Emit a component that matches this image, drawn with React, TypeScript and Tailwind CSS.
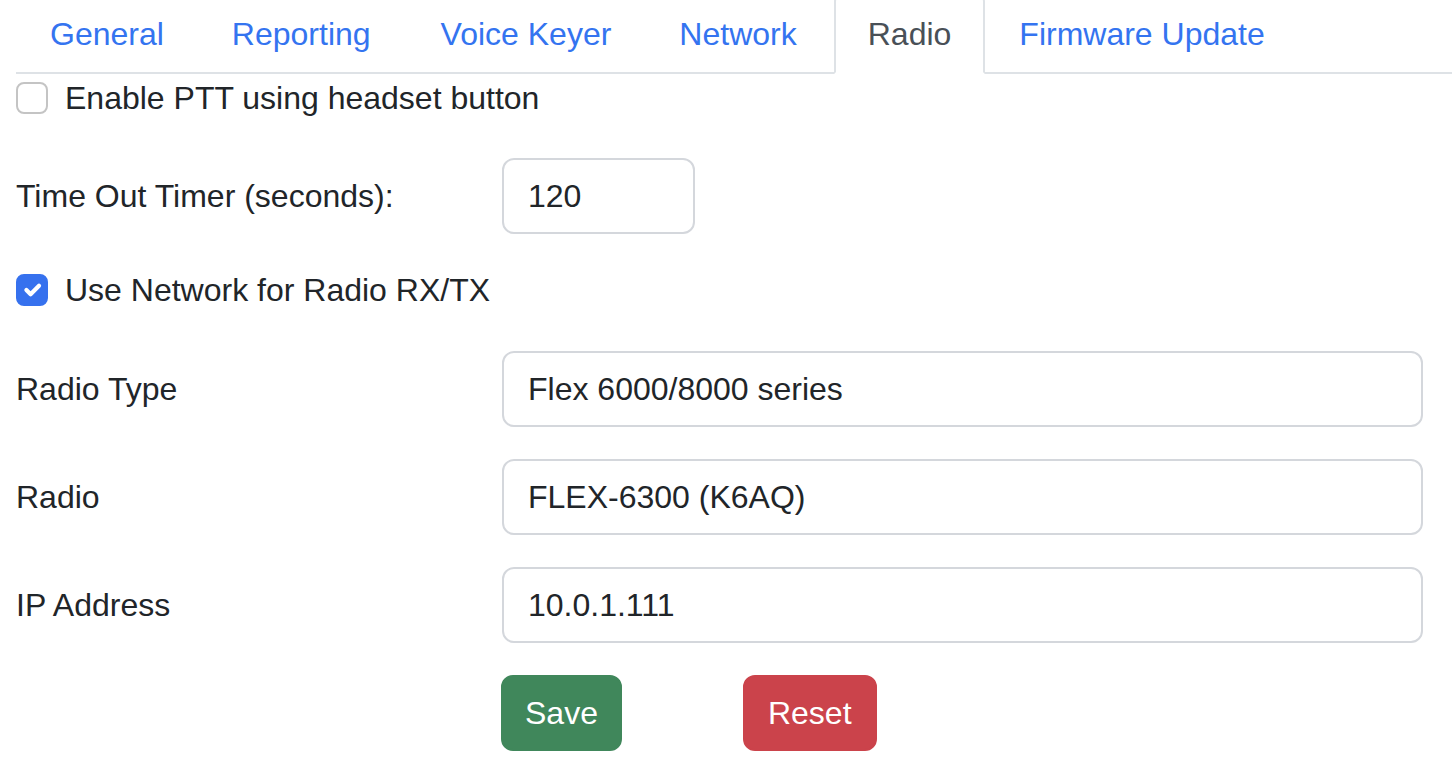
import { useState } from 'react'

const tabs = [
  { name: 'General', pad: 'px-8' },
  { name: 'Reporting', pad: 'px-8' },
  { name: 'Voice Keyer', pad: 'pl-[34px] pr-8' },
  { name: 'Network', pad: 'pl-8 pr-[35px]' },
  { name: 'Radio', pad: 'px-8' },
  { name: 'Firmware Update', pad: 'px-8' },
]

function CheckBox({ checked, onChange }: { checked: boolean; onChange: () => void }) {
  return (
    <button
      type="button"
      onClick={onChange}
      className={
        checked
          ? 'mt-2 w-8 h-8 shrink-0 rounded-lg border-2 border-[#3671ee] bg-[#3671ee] flex items-center justify-center'
          : 'mt-2 w-8 h-8 shrink-0 rounded-lg border-2 border-[#c4c4c4] bg-white'
      }
    >
      {checked && (
        <svg viewBox="0 0 20 20" className="w-7 h-7">
          <path d="M6 10l3 3l6-6" fill="none" stroke="#fff" strokeWidth="3" strokeLinecap="round" strokeLinejoin="round" />
        </svg>
      )}
    </button>
  )
}

function Field({ label, value, onChange }: { label: string; value: string; onChange: (v: string) => void }) {
  return (
    <div className="grid grid-cols-[486px_1fr] items-center">
      <label className="leading-[48px]">{label}</label>
      <input
        value={value}
        onChange={(e) => onChange(e.target.value)}
        className="h-[76px] px-6 border-2 border-[#d4d7dc] rounded-xl leading-[48px] text-[#212529] outline-none"
      />
    </div>
  )
}

export default function App() {
  const [active, setActive] = useState('Radio')
  const [headsetPtt, setHeadsetPtt] = useState(false)
  const [useNetwork, setUseNetwork] = useState(true)
  const [timeout, setTimeoutValue] = useState('120')
  const [radioType, setRadioType] = useState('Flex 6000/8000 series')
  const [radio, setRadio] = useState('FLEX-6300 (K6AQ)')
  const [ip, setIp] = useState('10.0.1.111')

  return (
    <div className="min-h-screen overflow-hidden bg-white text-[32px] text-[#212529] font-['Liberation_Sans',Arial,sans-serif]">
      {/* tabs, top edge cut off like the original */}
      <div className="-mt-[10px] ml-4 flex border-b-2 border-[#dee2e6]">
        {tabs.map((t) => (
          <button
            key={t.name}
            onClick={() => setActive(t.name)}
            className={
              t.name === active
                ? `${t.pad} pt-[18px] pb-[14px] leading-[48px] -mb-[2px] border-2 border-[#dee2e6] border-b-white bg-white rounded-t-xl text-[#495057]`
                : `${t.pad} pt-[18px] pb-[14px] leading-[48px] -mb-[2px] border-2 border-transparent text-[#3474f0]`
            }
          >
            {t.name}
          </button>
        ))}
      </div>

      <div className="pl-4 pr-[29px]">
        <div className="flex items-start">
          <CheckBox checked={headsetPtt} onChange={() => setHeadsetPtt(!headsetPtt)} />
          <span className="ml-[17px] leading-[48px]">Enable PTT using headset button</span>
        </div>

        <div className="mt-[36px] grid grid-cols-[486px_193px] items-center">
          <label className="leading-[48px]">Time Out Timer (seconds):</label>
          <input
            value={timeout}
            onChange={(e) => setTimeoutValue(e.target.value)}
            className="h-[76px] px-6 border-2 border-[#d4d7dc] rounded-xl leading-[48px] outline-none"
          />
        </div>

        <div className="mt-8 flex items-start">
          <CheckBox checked={useNetwork} onChange={() => setUseNetwork(!useNetwork)} />
          <span className="ml-[17px] leading-[48px]">Use Network for Radio RX/TX</span>
        </div>

        <div className="mt-[37px] flex flex-col gap-8">
          <Field label="Radio Type" value={radioType} onChange={setRadioType} />
          <Field label="Radio" value={radio} onChange={setRadio} />
          <Field label="IP Address" value={ip} onChange={setIp} />
          <div className="pl-[485px] flex">
            <button className="px-[22px] py-3 leading-[48px] border-2 border-[#40875b] bg-[#40875b] text-white rounded-xl">
              Save
            </button>
            <button className="ml-[121px] px-[23px] py-3 leading-[48px] border-2 border-[#cb434b] bg-[#cb434b] text-white rounded-xl">
              Reset
            </button>
          </div>
        </div>
      </div>
    </div>
  )
}
